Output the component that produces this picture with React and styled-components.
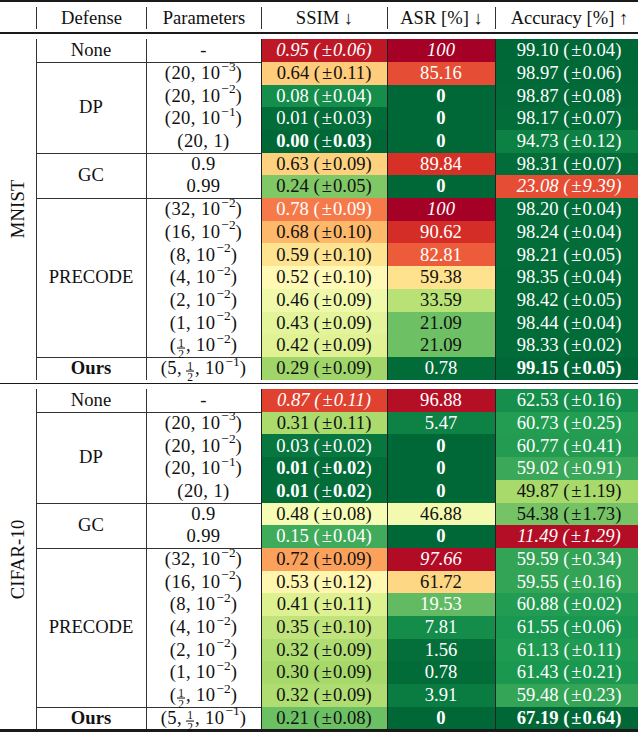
import React from 'react'
import styled, { createGlobalStyle, css } from 'styled-components'

const SERIF = `'Liberation Serif', 'Times New Roman', Times, 'DejaVu Serif', serif`

const GlobalStyle = createGlobalStyle`
  html, body {
    margin: 0;
    padding: 0;
    background: #fff;
    overflow: hidden;
  }
  body {
    font-family: ${SERIF};
    color: #111;
  }
`

const COLS = '36px 110px 115px 126px 108px 148px'
const ROW_H = 22.7

// RdYlGn colour map
const STOPS = ['#a50026', '#d73027', '#f46d43', '#fdae61', '#fee08b', '#ffffbf',
  '#d9ef8b', '#a6d96a', '#66bd63', '#1a9850', '#006837']

const toRgb = h => [1, 3, 5].map(i => parseInt(h.slice(i, i + 2), 16))

const rdylgn = t => {
  const x = Math.max(0, Math.min(1, t)) * 10
  const i = Math.min(9, Math.floor(x))
  const f = x - i
  const a = toRgb(STOPS[i])
  const b = toRgb(STOPS[i + 1])
  const c = a.map((v, k) => Math.round(v + (b[k] - v) * f))
  return `rgb(${c.join(',')})`
}

const ink = t => (t < 0.25 || t > 0.8 ? '#fff' : '#111')

const Page = styled.div`
  width: 643px;
  font-family: ${SERIF};
  color: #111;
`

const Rule = styled.div`
  height: ${p => p.$h}px;
  background: #1a1a1a;
  margin-top: ${p => p.$before || 0}px;
  margin-bottom: ${p => p.$after || 0}px;
`

const HeaderRow = styled.div`
  display: grid;
  grid-template-columns: ${COLS};
  padding: 5px 0 3px;
`

const HeadCell = styled.div`
  height: 22px;
  display: flex;
  align-items: center;
  justify-content: center;
  font-family: ${SERIF};
  font-size: 18.6px;
  white-space: nowrap;
  border-left: ${p => (p.$first ? 'none' : '1px solid #333')};
`

const Section = styled.div`
  display: grid;
  grid-template-columns: ${COLS};
  grid-template-rows: repeat(15, ${ROW_H}px);
  font-family: ${SERIF};
  font-size: 18.6px;
  line-height: 1;
`

const DataLabel = styled.div`
  grid-column: 1;
  grid-row: 1 / -1;
  display: flex;
  align-items: center;
  justify-content: center;
  writing-mode: vertical-rl;
  transform: rotate(180deg);
  font-size: 18.6px;
  letter-spacing: 0.2px;
`

const lines = css`
  box-shadow: inset 1px 0 0 #333 ${p => (p.$top ? ', inset 0 1px 0 #333' : '')};
`

const DefenseCell = styled.div`
  grid-column: 2;
  grid-row: ${p => p.$row} / span ${p => p.$span};
  display: flex;
  align-items: center;
  justify-content: center;
  font-weight: ${p => (p.$bold ? 700 : 400)};
  ${lines}
`

const ParamCell = styled.div`
  grid-column: 3;
  grid-row: ${p => p.$row};
  display: flex;
  align-items: center;
  justify-content: center;
  white-space: nowrap;
  letter-spacing: 0.4px;
  ${lines}
`

const ValueCell = styled.div`
  grid-column: ${p => p.$col};
  grid-row: ${p => p.$row};
  display: flex;
  align-items: center;
  justify-content: center;
  white-space: nowrap;
  background: ${p => p.$bg};
  color: ${p => p.$fg};
  box-shadow: inset 1px 0 0 #222;
  font-style: ${p => (p.$italic ? 'italic' : 'normal')};
`

const Strong = styled.span`
  font-weight: ${p => (p.$on ? 700 : 400)};
`

const Pm = styled.span`
  margin: 0 1px 0 2px;
`

const Sup = styled.span`
  display: inline-block;
  font-size: 0.72em;
  transform: translateY(-0.55em);
  letter-spacing: 0;
  margin-left: 1px;
`

const Frac = styled.span`
  display: inline-flex;
  flex-direction: column;
  align-items: center;
  font-size: 0.62em;
  line-height: 0.88;
  transform: translateY(0.22em);
  margin: 0 1px 0 ${p => (p.$lead ? 4 : 1)}px;
  letter-spacing: 0;
`

const Numer = styled.span`
  border-bottom: 1px solid currentColor;
  padding: 0 1px;
`

// params: array of parts joined by ", "  — string | ['pow', base, exp] | ['frac', n, d]
const Param = ({ p }) => {
  if (typeof p === 'string') return <>{p}</>
  return (
    <>
      (
      {p.map((part, i) => (
        <React.Fragment key={i}>
          {i > 0 && ', '}
          {typeof part === 'string' && part}
          {Array.isArray(part) && part[0] === 'pow' && <>{part[1]}<Sup>{part[2]}</Sup></>}
          {Array.isArray(part) && part[0] === 'frac' && (
            <Frac $lead={i > 0}><Numer>{part[1]}</Numer><span>{part[2]}</span></Frac>
          )}
        </React.Fragment>
      ))}
      )
    </>
  )
}

// stat: [value, sd, t, flags]  flags: i = italic, b = bold, p = bold numbers only
const Stat = ({ s }) => {
  const [v, sd, , f = ''] = s
  const all = f.includes('b')
  const nums = all || f.includes('p')
  if (sd == null) return <Strong $on={nums}>{v}</Strong>
  return (
    <>
      <Strong $on={nums}>{v}</Strong>
      &nbsp;
      <Strong $on={all}>(<Pm>±</Pm></Strong>
      <Strong $on={nums}>{sd}</Strong>
      <Strong $on={all}>)</Strong>
    </>
  )
}

const p10 = e => ['pow', '10', e]
const half = ['frac', '1', '2']

const ssim = v => 1 - parseFloat(v)
const asr = v => 1 - parseFloat(v) / 100
const accM = v => 1 - ((99.15 - parseFloat(v)) * 0.85) / 76.07
const accC = v => 0.03 + (0.97 * (parseFloat(v) - 11.49)) / 55.7

const S = (v, sd, f) => [v, sd, ssim(v), f]
const A = (v, f) => [v, null, asr(v), f]

const precodeParams = [
  ['32', p10('−2')], ['16', p10('−2')], ['8', p10('−2')], ['4', p10('−2')],
  ['2', p10('−2')], ['1', p10('−2')], [half, p10('−2')],
]
const dpParams = [['20', p10('−3')], ['20', p10('−2')], ['20', p10('−1')], ['20', '1']]
const oursParams = ['5', half, p10('−1')]

const mnistAcc = (v, sd, f) => [v, sd, accM(v), f]
const cifarAcc = (v, sd, f) => [v, sd, accC(v), f]

const MNIST = [
  { name: 'None', rows: [['-', S('0.95', '0.06', 'i'), A('100', 'i'), mnistAcc('99.10', '0.04')]] },
  {
    name: 'DP',
    rows: [
      [dpParams[0], S('0.64', '0.11'), A('85.16'), mnistAcc('98.97', '0.06')],
      [dpParams[1], S('0.08', '0.04'), A('0', 'b'), mnistAcc('98.87', '0.08')],
      [dpParams[2], S('0.01', '0.03'), A('0', 'b'), mnistAcc('98.17', '0.07')],
      [dpParams[3], S('0.00', '0.03', 'p'), A('0', 'b'), mnistAcc('94.73', '0.12')],
    ],
  },
  {
    name: 'GC',
    rows: [
      ['0.9', S('0.63', '0.09'), A('89.84'), mnistAcc('98.31', '0.07')],
      ['0.99', S('0.24', '0.05'), A('0', 'b'), mnistAcc('23.08', '9.39', 'i')],
    ],
  },
  {
    name: 'PRECODE',
    rows: [
      [precodeParams[0], S('0.78', '0.09'), A('100', 'i'), mnistAcc('98.20', '0.04')],
      [precodeParams[1], S('0.68', '0.10'), A('90.62'), mnistAcc('98.24', '0.04')],
      [precodeParams[2], S('0.59', '0.10'), A('82.81'), mnistAcc('98.21', '0.05')],
      [precodeParams[3], S('0.52', '0.10'), A('59.38'), mnistAcc('98.35', '0.04')],
      [precodeParams[4], S('0.46', '0.09'), A('33.59'), mnistAcc('98.42', '0.05')],
      [precodeParams[5], S('0.43', '0.09'), A('21.09'), mnistAcc('98.44', '0.04')],
      [precodeParams[6], S('0.42', '0.09'), A('21.09'), mnistAcc('98.33', '0.02')],
    ],
  },
  {
    name: 'Ours',
    bold: true,
    rows: [[oursParams, S('0.29', '0.09'), A('0.78'), mnistAcc('99.15', '0.05', 'b')]],
  },
]

const CIFAR = [
  { name: 'None', rows: [['-', S('0.87', '0.11', 'i'), A('96.88'), cifarAcc('62.53', '0.16')]] },
  {
    name: 'DP',
    rows: [
      [dpParams[0], S('0.31', '0.11'), A('5.47'), cifarAcc('60.73', '0.25')],
      [dpParams[1], S('0.03', '0.02'), A('0', 'b'), cifarAcc('60.77', '0.41')],
      [dpParams[2], S('0.01', '0.02', 'p'), A('0', 'b'), cifarAcc('59.02', '0.91')],
      [dpParams[3], S('0.01', '0.02', 'p'), A('0', 'b'), cifarAcc('49.87', '1.19')],
    ],
  },
  {
    name: 'GC',
    rows: [
      ['0.9', S('0.48', '0.08'), A('46.88'), cifarAcc('54.38', '1.73')],
      ['0.99', S('0.15', '0.04'), A('0', 'b'), cifarAcc('11.49', '1.29', 'i')],
    ],
  },
  {
    name: 'PRECODE',
    rows: [
      [precodeParams[0], S('0.72', '0.09'), A('97.66', 'i'), cifarAcc('59.59', '0.34')],
      [precodeParams[1], S('0.53', '0.12'), A('61.72'), cifarAcc('59.55', '0.16')],
      [precodeParams[2], S('0.41', '0.11'), A('19.53'), cifarAcc('60.88', '0.02')],
      [precodeParams[3], S('0.35', '0.10'), A('7.81'), cifarAcc('61.55', '0.06')],
      [precodeParams[4], S('0.32', '0.09'), A('1.56'), cifarAcc('61.13', '0.11')],
      [precodeParams[5], S('0.30', '0.09'), A('0.78'), cifarAcc('61.43', '0.21')],
      [precodeParams[6], S('0.32', '0.09'), A('3.91'), cifarAcc('59.48', '0.23')],
    ],
  },
  {
    name: 'Ours',
    bold: true,
    rows: [[oursParams, S('0.21', '0.08'), A('0', 'b'), cifarAcc('67.19', '0.64', 'b')]],
  },
]

const DataSection = ({ label, groups }) => {
  let row = 1
  return (
    <Section>
      <DataLabel>{label}</DataLabel>
      {groups.map((g, gi) => {
        const start = row
        row += g.rows.length
        return (
          <React.Fragment key={g.name}>
            <DefenseCell $row={start} $span={g.rows.length} $top={gi > 0} $bold={g.bold}>
              {g.name}
            </DefenseCell>
            {g.rows.map(([param, ...stats], ri) => (
              <React.Fragment key={ri}>
                <ParamCell $row={start + ri} $top={gi > 0 && ri === 0}>
                  <Param p={param} />
                </ParamCell>
                {stats.map((s, si) => (
                  <ValueCell
                    key={si}
                    $col={4 + si}
                    $row={start + ri}
                    $bg={rdylgn(s[2])}
                    $fg={ink(s[2])}
                    $italic={(s[3] || '').includes('i')}
                  >
                    <Stat s={s} />
                  </ValueCell>
                ))}
              </React.Fragment>
            ))}
          </React.Fragment>
        )
      })}
    </Section>
  )
}

const App = () => {
  return (
    <Page>
      <GlobalStyle />
      <Rule $h={2} />
      <HeaderRow>
        <HeadCell $first />
        <HeadCell>Defense</HeadCell>
        <HeadCell>Parameters</HeadCell>
        <HeadCell>SSIM&nbsp;↓</HeadCell>
        <HeadCell>ASR [%]&nbsp;↓</HeadCell>
        <HeadCell>Accuracy [%]&nbsp;↑</HeadCell>
      </HeaderRow>
      <Rule $h={1.5} $after={5.8} />
      <DataSection label="MNIST" groups={MNIST} />
      <Rule $h={1.5} $before={3} $after={5} />
      <DataSection label="CIFAR-10" groups={CIFAR} />
      <Rule $h={2.5} />
    </Page>
  )
}

export default App
